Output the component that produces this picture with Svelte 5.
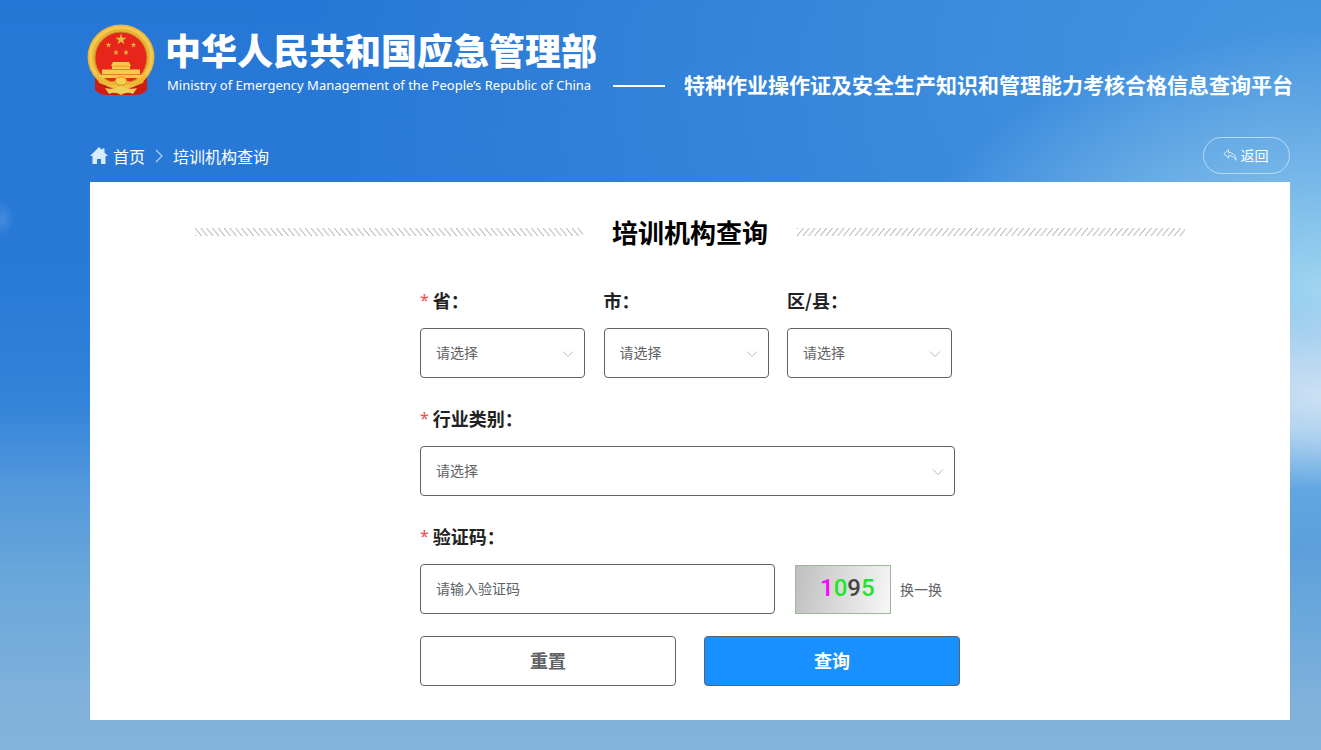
<script>
  let province = $state('');
  let city = $state('');
  let district = $state('');
  let industry = $state('');
  let code = $state('');

  const captcha = [
    { digit: '1', color: '#f0f' },
    { digit: '0', color: '#1fe62a' },
    { digit: '9', color: '#444' },
    { digit: '5', color: '#1fe62a' }
  ];

  function reset() {
    province = city = district = industry = code = '';
  }
</script>

{#snippet chevron()}
  <svg class="chevron" viewBox="0 0 12 8" width="12" height="8" aria-hidden="true">
    <path d="M1 1.5 6 6.5 11 1.5" fill="none" stroke="#b4b8c0" stroke-width="1" />
  </svg>
{/snippet}

{#snippet star(x, y, r)}
  <path
    transform="translate({x} {y}) scale({r})"
    d="M0-1 .23-.31 .95-.31 .36.12 .59.81 0 .38-.59.81-.36.12-.95-.31-.23-.31Z"
    fill="#e9b83c"
  />
{/snippet}

<div class="page">
  <header>
    <svg class="emblem" viewBox="0 0 68 72" width="68" height="72" aria-hidden="true">
      <path d="M8 48 8 66q4 5 13 5h26q9 0 13-5l0-18Z" fill="#d01d14" />
      <path d="M12 55q5 8 12 9l-3 6M56 55q-5 8-12 9l3 6" fill="none" stroke="#8f1710" stroke-width="1" />
      <ellipse cx="34" cy="33" rx="33.5" ry="32.5" fill="#e9b338" />
      <ellipse cx="34" cy="33" rx="30.500" ry="29.500" fill="none" stroke="#f4ca52" stroke-width="3" />
      <circle cx="34" cy="34" r="26" fill="#e8251b" stroke="#c88a1e" stroke-width="1" />
      {@render star(34, 15.5, 6)}
      {@render star(21.5, 21, 3)}
      {@render star(46.5, 21, 3)}
      {@render star(29, 28.5, 3)}
      {@render star(39, 28.5, 3)}
      <path d="M26 38h16l2 4H24ZM25 42h18v3H25ZM15 45.500h38v5H15ZM12 51h44l-3 3H15Z" fill="#f5cb4a" />
      <path d="M26 42.200h16" stroke="#c98b20" stroke-width=".7" />
      <path d="M9 49q8 11 19 8 6-6 12 0 11 3 19-8l-3 10q-10 4-16 2-6 4-12 0-6 2-16-2Z" fill="#edb735" />
      <path d="M28 58q0-5 6-5t6 5l-3 3h-6Z" fill="#f6d04e" stroke="#c98b20" stroke-width=".8" />
      <path d="M18 64q8 2 16-2 8 4 16 2l-4 6q-6-3-12 1-6-4-12-1Z" fill="#f7cf50" />
    </svg>
    <div class="ministry">
      <div class="name">中华人民共和国应急管理部</div>
      <div class="english">Ministry of Emergency Management of the People’s Republic of China</div>
    </div>
    <span class="dash"></span>
    <div class="platform">特种作业操作证及安全生产知识和管理能力考核合格信息查询平台</div>
  </header>

  <div class="bar">
    <nav>
      <a href="#home">
        <svg viewBox="0 0 18 17" width="18" height="17" aria-hidden="true">
          <path d="M9 0 0 9h2.500v8H7v-5h4v5h4.500V9H18L14.500 5.500V1.500H12V3Z" fill="#d9ecff" />
        </svg>
        首页
      </a>
      <svg viewBox="0 0 8 14" width="8" height="14" aria-hidden="true">
        <path d="M1 1 7 7 1 13" fill="none" stroke="#b7d7f7" stroke-width="1.100" />
      </svg>
      <span>培训机构查询</span>
    </nav>
    <button class="back" type="button">
      <svg viewBox="0 0 14 12" width="14" height="12" aria-hidden="true">
        <path d="M5.500.7.8 5l4.700 4V6.500Q10.500 6.500 13 11.300 13 4 5.500 3.400Z" fill="none" stroke="#e4f2ff" stroke-width=".9" stroke-linejoin="round" />
      </svg>
      返回
    </button>
  </div>

  <main>
    <div class="heading">
      <svg class="hatch" width="100%" height="8" aria-hidden="true">
        <defs>
          <pattern id="hatch-left" width="5.800" height="8" patternUnits="userSpaceOnUse">
            <path d="M-5.800 0 .7 8M0 0 6.500 8" stroke="#8c8c8c" stroke-width=".8" />
          </pattern>
        </defs>
        <rect width="100%" height="8" fill="url(#hatch-left)" />
      </svg>
      <h1>培训机构查询</h1>
      <svg class="hatch" width="100%" height="8" aria-hidden="true">
        <defs>
          <pattern id="hatch-right" width="5.800" height="8" patternUnits="userSpaceOnUse">
            <path d="M.7 0-5.800 8M6.500 0 0 8" stroke="#8c8c8c" stroke-width=".8" />
          </pattern>
        </defs>
        <rect width="100%" height="8" fill="url(#hatch-right)" />
      </svg>
    </div>

    <form onsubmit={(e) => e.preventDefault()}>
      <div class="regions">
        <div class="field">
          <label for="province"><i>*</i>省：</label>
          <div class="select">
            <select id="province" bind:value={province}><option value="">请选择</option></select>
            {@render chevron()}
          </div>
        </div>
        <div class="field">
          <label for="city">市：</label>
          <div class="select">
            <select id="city" bind:value={city}><option value="">请选择</option></select>
            {@render chevron()}
          </div>
        </div>
        <div class="field">
          <label for="district">区/县：</label>
          <div class="select">
            <select id="district" bind:value={district}><option value="">请选择</option></select>
            {@render chevron()}
          </div>
        </div>
      </div>

      <div class="field industry">
        <label for="industry"><i>*</i>行业类别：</label>
        <div class="select">
          <select id="industry" bind:value={industry}><option value="">请选择</option></select>
          {@render chevron()}
        </div>
      </div>

      <div class="field">
        <label for="code"><i>*</i>验证码：</label>
        <div class="verify">
          <input id="code" type="text" placeholder="请输入验证码" bind:value={code} />
          <div class="captcha">
            {#each captcha as c}<span style:color={c.color}>{c.digit}</span>{/each}
          </div>
          <button class="swap" type="button">换一换</button>
        </div>
      </div>

      <div class="actions">
        <button class="reset" type="button" onclick={reset}>重置</button>
        <button class="query" type="submit">查询</button>
      </div>
    </form>
  </main>
</div>

<style>
  :global(body) {
    margin: 0;
  }
  .page {
    box-sizing: border-box;
    min-height: 100vh;
    padding: 24px 31px 30px 90px;
    font-family: 'Noto Sans CJK SC', sans-serif;
    background:
      radial-gradient(ellipse 12px 18px at 2px 219px, #5c9fe480, #5c9fe400),
      radial-gradient(ellipse 200px 95px at 100% 395px, #cbe0f3, #c4dcf2cc 40%, #c4dcf200),
      radial-gradient(ellipse 420px 260px at 100% 290px, #a0d5f0, #86c6ec00),
      radial-gradient(ellipse 1000px 640px at 100% 60px, #4796e0, #4594df00),
      linear-gradient(#2777d6 0, #2979d7 280px, #3383da 400px, #5399db 490px, #6aa7da 580px, #80b1db 700px, #83b4dc 750px);
  }
  button,
  select,
  input {
    box-sizing: border-box;
    margin: 0;
    font-family: inherit;
  }
  header {
    display: flex;
    color: #fff;
    white-space: nowrap;
  }
  .emblem {
    flex: none;
    margin-left: -3px;
  }
  .ministry {
    margin-left: 10px;
    width: 430px;
  }
  .name {
    font-size: 36px;
    font-weight: 900;
    line-height: 51px;
  }
  .english {
    padding-left: 2px;
    font: 400 13px/20px 'Noto Sans', sans-serif;
  }
  .dash {
    flex: none;
    width: 52px;
    height: 2px;
    margin: 61px 19px 0 18px;
    background: #fff;
  }
  .platform {
    margin-top: 45px;
    font-size: 21px;
    font-weight: 700;
    line-height: 30px;
  }
  .bar {
    display: flex;
    justify-content: space-between;
    align-items: center;
    margin-top: 38px;
  }
  nav {
    display: flex;
    align-items: center;
    gap: 10px;
    color: #fff;
    font-size: 16px;
    line-height: 24px;
  }
  nav a {
    display: flex;
    align-items: center;
    gap: 5px;
    color: inherit;
    text-decoration: none;
  }
  .back {
    display: flex;
    align-items: center;
    justify-content: center;
    gap: 4px;
    width: 87px;
    height: 37px;
    padding: 0 2px 2px 0;
    border: 1px solid #b9dcf5;
    border-radius: 19px;
    background: none;
    color: #fff;
    font-size: 14px;
  }
  main {
    margin-top: 8px;
    padding: 30px 105px 34px;
    background: #fff;
  }
  .heading {
    display: flex;
    align-items: center;
    gap: 29px;
  }
  .hatch {
    flex: 1;
    min-width: 0;
  }
  h1 {
    margin: 0;
    color: #000;
    font-size: 26px;
    font-weight: 700;
    line-height: 40px;
  }
  form {
    width: 540px;
    margin: 34px auto 0 225px;
  }
  .regions {
    display: grid;
    grid-template-columns: repeat(3, 165px);
    justify-content: space-between;
    width: 532px;
    margin-bottom: 26px;
  }
  .field {
    margin-bottom: 26px;
  }
  .regions .field {
    margin-bottom: 0;
  }
  label {
    display: block;
    margin-bottom: 14px;
    color: #222;
    font-size: 18px;
    font-weight: 700;
    line-height: 28px;
  }
  label i {
    margin-right: 4px;
    color: #f04a4a;
    font: 400 16px/20px 'Noto Sans', sans-serif;
    vertical-align: 2px;
  }
  .select {
    position: relative;
  }
  .industry .select {
    width: 535px;
  }
  select,
  input {
    display: block;
    width: 100%;
    height: 50px;
    padding: 0 15px 2px;
    border: 1px solid #606266;
    border-radius: 4px;
    appearance: none;
    background: #fff;
    color: #606266;
    font-size: 14px;
  }
  input::placeholder {
    color: #606266;
    opacity: 1;
  }
  .chevron {
    position: absolute;
    top: 22px;
    right: 11px;
    pointer-events: none;
  }
  .verify {
    display: flex;
    align-items: center;
    margin-bottom: -4px;
  }
  .verify input {
    width: 355px;
  }
  .captcha {
    box-sizing: border-box;
    width: 96px;
    height: 49px;
    margin: 0 9px 0 20px;
    padding-left: 24px;
    border: 1px solid #9bb897;
    background: linear-gradient(100deg, #bfbfbf, #f7f7f7);
    font: 500 24px/44px Roboto, sans-serif;
    white-space: nowrap;
  }
  .swap {
    padding: 0;
    border: 0;
    background: none;
    color: #606266;
    font-size: 14px;
  }
  .actions {
    display: flex;
    gap: 28px;
  }
  .actions button {
    width: 256px;
    height: 50px;
    padding: 0 0 2px;
    border: 1px solid #606266;
    border-radius: 4px;
    background: #fff;
    color: #606266;
    font-size: 18px;
    font-weight: 700;
  }
  .actions .query {
    background: #1890ff;
    color: #fff;
  }
</style>
